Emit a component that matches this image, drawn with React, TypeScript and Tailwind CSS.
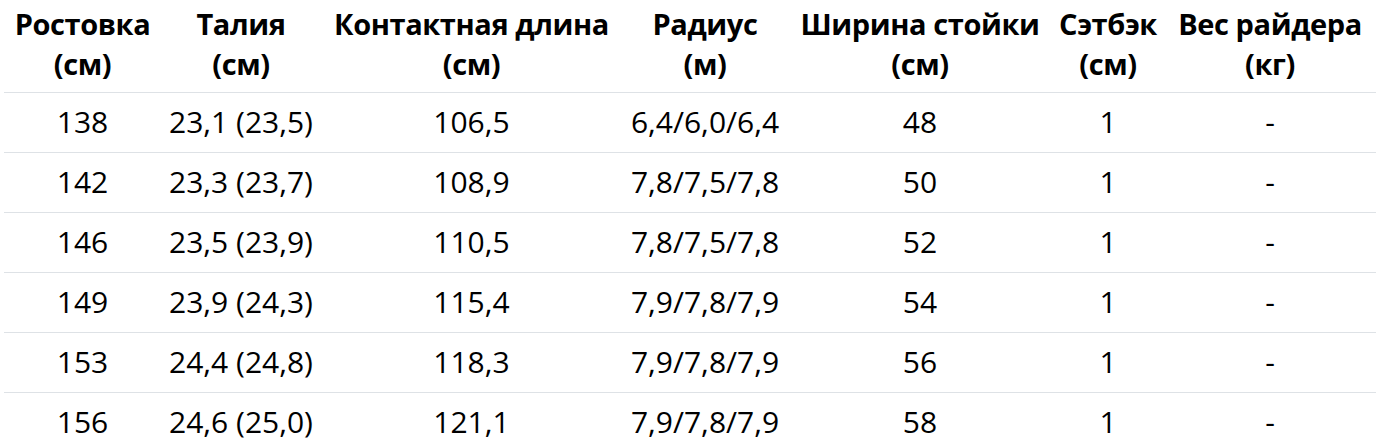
const rows = [
  ["138", "23,1 (23,5)", "106,5", "6,4/6,0/6,4", "48", "1", "-"],
  ["142", "23,3 (23,7)", "108,9", "7,8/7,5/7,8", "50", "1", "-"],
  ["146", "23,5 (23,9)", "110,5", "7,8/7,5/7,8", "52", "1", "-"],
  ["149", "23,9 (24,3)", "115,4", "7,9/7,8/7,9", "54", "1", "-"],
  ["153", "24,4 (24,8)", "118,3", "7,9/7,8/7,9", "56", "1", "-"],
  ["156", "24,6 (25,0)", "121,1", "7,9/7,8/7,9", "58", "1", "-"],
];

const headers = [
  ["Ростовка", "(см)"],
  ["Талия", "(см)"],
  ["Контактная длина", "(см)"],
  ["Радиус", "(м)"],
  ["Ширина стойки", "(см)"],
  ["Сэтбэк", "(см)"],
  ["Вес райдера", "(кг)"],
];

const widths = ["w-[157px]", "w-[160px]", "w-[301px]", "w-[166px]", "w-[264px]", "w-[112px]", "w-[212px]"];

export default function App() {
  return (
    <div className="bg-white px-1 font-['Open_Sans',sans-serif] text-black">
      <table className="w-[1372px] table-fixed border-collapse">
        <colgroup>
          {widths.map((w, i) => (
            <col key={i} className={w} />
          ))}
        </colgroup>
        <thead>
          <tr className="border-b border-[#dee2e6]">
            {headers.map(([a, b]) => (
              <th key={a} className="whitespace-nowrap pt-[4px] pb-[8px] text-center text-[29px] leading-[40px] font-bold tracking-[-0.4px]">
                {a}
                <br />
                {b}
              </th>
            ))}
          </tr>
        </thead>
        <tbody>
          {rows.map((r) => (
            <tr key={r[0]} className="border-b border-[#dee2e6] last:border-b-0">
              {r.map((c, i) => (
                <td key={i} className="whitespace-nowrap pt-[9px] pb-[10px] text-center text-[30px] leading-[40px]">
                  {c}
                </td>
              ))}
            </tr>
          ))}
        </tbody>
      </table>
    </div>
  );
}
